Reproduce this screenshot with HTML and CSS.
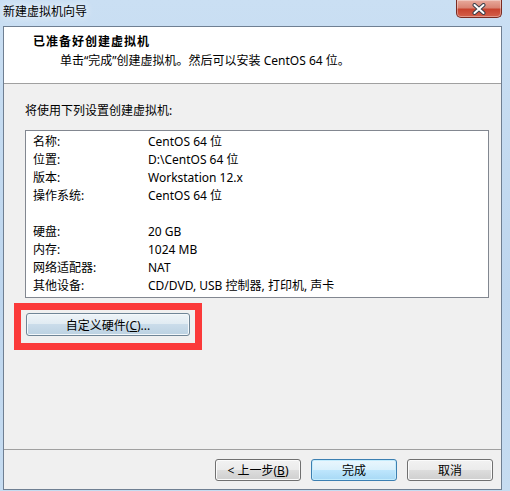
FILE: index.html
```html
<!DOCTYPE html>
<html>
<head>
    <meta charset="utf-8" />
    <title>新建虚拟机向导</title>
    <link rel="stylesheet" href="styles.css">
</head>
<body>
<div class="window">
    <div class="titlebar">
        <span class="title">新建虚拟机向导</span>
        <div class="close">
            <svg width="16" height="12" viewBox="0 0 16 12">
                <path d="M3.5 2 L12.5 10 M12.5 2 L3.5 10" stroke="#3a3f4a" stroke-width="4" stroke-linecap="round"/>
                <path d="M3.5 2 L12.5 10 M12.5 2 L3.5 10" stroke="#fff" stroke-width="2" stroke-linecap="round"/>
            </svg>
        </div>
    </div>
    <div class="client">
        <div class="header">
            <div class="header-title">已准备好创建虚拟机</div>
            <div class="header-sub">单击“完成”创建虚拟机。然后可以安装 CentOS 64 位。</div>
        </div>
        <div class="content">
            <div class="intro">将使用下列设置创建虚拟机:</div>
            <div class="summary">
                <div class="row"><span class="key">名称:</span><span>CentOS 64 位</span></div>
                <div class="row"><span class="key">位置:</span><span>D:\CentOS 64 位</span></div>
                <div class="row"><span class="key">版本:</span><span>Workstation 12.x</span></div>
                <div class="row"><span class="key">操作系统:</span><span>CentOS 64 位</span></div>
                <div class="row"></div>
                <div class="row"><span class="key">硬盘:</span><span>20 GB</span></div>
                <div class="row"><span class="key">内存:</span><span>1024 MB</span></div>
                <div class="row"><span class="key">网络适配器:</span><span>NAT</span></div>
                <div class="row"><span class="key">其他设备:</span><span>CD/DVD, USB 控制器, 打印机, 声卡</span></div>
            </div>
            <div class="highlight">
                <button class="btn btn-custom">自定义硬件(<u>C</u>)...</button>
            </div>
        </div>
        <div class="footer">
            <button class="btn">&lt; 上一步(<u>B</u>)</button>
            <button class="btn btn-default">完成</button>
            <button class="btn">取消</button>
        </div>
    </div>
</div>
</body>
</html>
```

FILE: styles.css
```css
body{
    margin: 0px;
}
.window{
    width: 510px;
    height: 491px;
    box-sizing: border-box;
    padding: 0 8px 1px 3px;
    background: linear-gradient(180deg, #cadff3 0%, #bed6ee 60%, #c6dcf1 100%);
    display: flex;
    flex-direction: column;
    font-family: "Noto Sans", "Noto Sans CJK SC", sans-serif;
    font-size: 12px;
    color: #000;
}
.titlebar{
    height: 26px;
    display: flex;
    justify-content: space-between;
    align-items: flex-start;
}
.title{
    line-height: 24px;
    text-shadow: 0 0 6px #eef5fc, 0 0 10px #eef5fc;
}
.close{
    width: 46px;
    height: 18px;
    box-sizing: border-box;
    border: 1px solid #7a2b22;
    border-top: none;
    border-radius: 0 0 5px 5px;
    background: linear-gradient(180deg, #e8aa9d 0%, #d98474 45%, #c8432f 55%, #d4604a 100%);
    box-shadow: inset 0 0 0 1px rgba(255,255,255,0.35);
    display: flex;
    align-items: center;
    justify-content: center;
}
.client{
    flex: 1;
    display: flex;
    flex-direction: column;
    border: 1px solid #6f7f92;
    background: #f0f0f0;
}
.header{
    height: 57px;
    box-sizing: border-box;
    background: #fff;
    border-bottom: 1px solid #a0a0a0;
    padding: 5px 0 0 29px;
    line-height: 19px;
}
.header-title{
    font-weight: bold;
    letter-spacing: 1px;
}
.header-sub{
    padding-left: 27px;
}
.content{
    flex: 1;
    padding: 19px 12px 0 21px;
}
.intro{
    line-height: 16px;
    margin-bottom: 11px;
}
.summary{
    background: #fff;
    border: 1px solid #828790;
    padding: 2px 7px;
}
.row{
    display: flex;
    height: 18px;
    line-height: 18px;
}
.key{
    width: 115px;
}
.highlight{
    width: 188px;
    box-sizing: border-box;
    margin: 5px 0 0 -11px;
    border: 7px solid #fb3a3a;
    padding: 3px 0 7px 5px;
}
.footer{
    height: 40px;
    box-sizing: border-box;
    border-top: 1px solid #a0a0a0;
    padding: 9px 8px 0 0;
    display: flex;
    justify-content: flex-end;
    gap: 10px;
}
.btn{
    width: 86px;
    height: 22px;
    box-sizing: border-box;
    padding: 0;
    border: 1px solid #707070;
    border-radius: 3px;
    background: linear-gradient(180deg, #f2f2f2 0%, #ebebeb 50%, #dddddd 50%, #cfcfcf 100%);
    box-shadow: inset 0 0 0 1px #fbfbfb;
    font-family: inherit;
    font-size: 12px;
    color: #000;
}
.btn-default{
    border-color: #3c7fb1;
    background: linear-gradient(180deg, #eaf6fd 0%, #d9f0fc 50%, #bee6fd 50%, #a7d9f5 100%);
    box-shadow: inset 0 0 0 1px #c4ecfd;
}
.btn-custom{
    width: 164px;
    height: 23px;
    border-color: #6f8596;
    background: linear-gradient(180deg, #eef4f8 0%, #e0ebf2 50%, #cadcea 50%, #bcd2e2 100%);
    box-shadow: inset 0 0 0 1px #f4f8fb;
}
```
